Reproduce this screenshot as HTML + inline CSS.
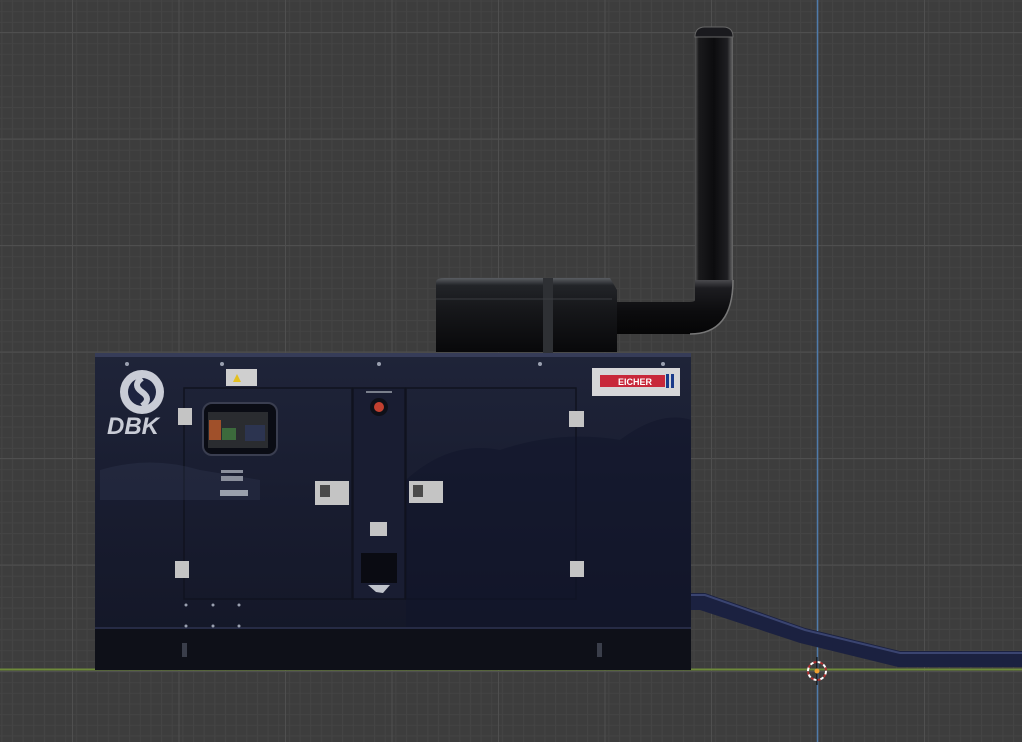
<!DOCTYPE html>
<html><head><meta charset="utf-8"><style>
html,body{margin:0;padding:0;width:1022px;height:742px;overflow:hidden;background:#3d3d3d}
svg{display:block}
</style></head><body>
<svg width="1022" height="742" viewBox="0 0 1022 742" xmlns="http://www.w3.org/2000/svg">
<defs>
<pattern id="minor" width="10.65" height="10.65" patternUnits="userSpaceOnUse" x="1.3" y="0.6">
<path d="M0 0.5H10.65M0.5 0V10.65" stroke="#444444" stroke-width="1" fill="none"/>
</pattern>
<pattern id="major" width="106.5" height="106.5" patternUnits="userSpaceOnUse" x="72" y="32">
<path d="M0 0.5H106.5M0.5 0V106.5" stroke="#4f4f4f" stroke-width="1" fill="none"/>
</pattern>
<linearGradient id="body" x1="0" y1="0" x2="0" y2="1">
<stop offset="0" stop-color="#1f2439"/><stop offset="0.5" stop-color="#181c2f"/><stop offset="1" stop-color="#131626"/>
</linearGradient>
<linearGradient id="vpipe" x1="0" y1="0" x2="1" y2="0">
<stop offset="0" stop-color="#555"/><stop offset="0.1" stop-color="#1a1a1c"/><stop offset="0.5" stop-color="#0c0c0e"/><stop offset="0.85" stop-color="#1e1e22"/><stop offset="1" stop-color="#6a6a6a"/>
</linearGradient>
<linearGradient id="hpipe" x1="0" y1="0" x2="0" y2="1">
<stop offset="0" stop-color="#4a4a4e"/><stop offset="0.15" stop-color="#1c1c20"/><stop offset="0.6" stop-color="#0c0c0e"/><stop offset="1" stop-color="#050506"/>
</linearGradient>
<linearGradient id="muff" x1="0" y1="0" x2="0" y2="1">
<stop offset="0" stop-color="#5a5d62"/><stop offset="0.1" stop-color="#222428"/><stop offset="0.4" stop-color="#17181b"/><stop offset="1" stop-color="#08080a"/>
</linearGradient>
</defs>
<rect width="1022" height="742" fill="url(#minor)"/>
<rect width="1022" height="742" fill="url(#major)"/>
<line x1="0" y1="669.5" x2="1022" y2="669.5" stroke="#6e8a3a" stroke-width="2"/>
<line x1="817.5" y1="0" x2="817.5" y2="742" stroke="#4f7bab" stroke-width="1.5"/>

<!-- hose -->
<path d="M688 593 L705 593 L805 628 L900 651 L1022 651 L1022 667 L898 667 L800 643 L700 610 L688 610 Z" fill="#1b2140"/>
<path d="M688 595 L705 595 L805 630 L900 653 L1022 653" stroke="#3a4470" stroke-width="2" fill="none"/>

<!-- exhaust -->
<rect x="695" y="35" width="38" height="260" fill="url(#vpipe)"/>
<path d="M695 37 Q695 27 705 27 L723 27 Q733 27 733 37 Z" fill="#1a1a1e" stroke="#666" stroke-width="1"/>
<path d="M695 280 L695 300 Q695 302 688 302 L610 302 L610 334 L690 334 Q733 334 733 280 Z" fill="url(#hpipe)"/>
<path d="M733 280 Q733 334 690 334" stroke="#777" stroke-width="1.5" fill="none"/>
<path d="M436 282 Q436 278 445 278 L610 278 L617 290 L617 352 L436 352 Z" fill="url(#muff)"/>
<rect x="543" y="278" width="10" height="75" fill="#2e3034"/>
<line x1="436" y1="299" x2="612" y2="299" stroke="#3a3c40" stroke-width="1"/>

<!-- generator body -->
<rect x="95" y="353" width="596" height="317" fill="url(#body)"/>
<rect x="95" y="353" width="596" height="4" fill="#363c58"/>
<rect x="95" y="628" width="596" height="42" fill="#0e1018"/>
<line x1="95" y1="628" x2="691" y2="628" stroke="#262b45" stroke-width="2"/>
<rect x="184" y="388" width="168" height="211" fill="none" stroke="#10131f" stroke-width="1.5"/>
<rect x="406" y="388" width="170" height="211" fill="none" stroke="#10131f" stroke-width="1.5"/>
<rect x="353" y="388" width="52" height="211" fill="#191d32" stroke="#10131f" stroke-width="1.5"/>
<path d="M406 480 Q450 440 500 450 Q560 430 620 440 Q660 410 691 420 L691 627 L406 627 Z" fill="#10142a" opacity="0.5"/>
<path d="M100 470 Q150 455 200 470 L260 480 L260 500 L100 500 Z" fill="#3a4260" opacity="0.25"/>
<g fill="#9aa0b0">
<circle cx="127" cy="364" r="2"/><circle cx="222" cy="364" r="2"/><circle cx="379" cy="364" r="2"/>
<circle cx="540" cy="364" r="2"/><circle cx="663" cy="364" r="2"/>
<circle cx="186" cy="605" r="1.5"/><circle cx="213" cy="605" r="1.5"/><circle cx="239" cy="605" r="1.5"/>
<circle cx="186" cy="626" r="1.5"/><circle cx="213" cy="626" r="1.5"/><circle cx="239" cy="626" r="1.5"/>
</g>
<circle cx="142" cy="392" r="22" fill="#c9ccd6"/>
<circle cx="142" cy="392" r="14" fill="#1e2440"/>
<path d="M142 378 Q132 385 142 392 Q152 399 142 406" stroke="#c9ccd6" stroke-width="6" fill="none"/>
<text x="107" y="434" font-family="Liberation Sans, sans-serif" font-weight="bold" font-style="italic" font-size="24" fill="#c9ccd6">DBK</text>
<rect x="226" y="369" width="31" height="17" fill="#cfcfcf"/>
<polygon points="233,382 237,374 241,382" fill="#e4c020"/>
<rect x="203" y="403" width="74" height="52" rx="9" fill="#0a0c14" stroke="#3a3e50" stroke-width="2"/>
<rect x="208" y="412" width="60" height="36" fill="#2a2c30"/>
<rect x="209" y="420" width="12" height="20" fill="#a0502a"/>
<rect x="222" y="428" width="14" height="12" fill="#3c6a3c"/>
<rect x="245" y="425" width="20" height="16" fill="#2c3450"/>
<rect x="221" y="470" width="22" height="3" fill="#8a8f9c"/>
<rect x="221" y="476" width="22" height="5" fill="#8a8f9c"/>
<rect x="220" y="490" width="28" height="6" fill="#9aa0ac"/>
<g fill="#c4c4c4">
<rect x="178" y="408" width="14" height="17"/><rect x="175" y="561" width="14" height="17"/>
<rect x="569" y="411" width="15" height="16"/><rect x="570" y="561" width="14" height="16"/>
<rect x="315" y="481" width="34" height="24"/><rect x="409" y="481" width="34" height="22"/>
<rect x="370" y="522" width="17" height="14"/>
</g>
<g fill="#4a4a4a"><rect x="320" y="485" width="10" height="12"/><rect x="413" y="485" width="10" height="12"/></g>
<circle cx="379" cy="407" r="9" fill="#0e1018"/>
<circle cx="379" cy="407" r="5" fill="#c24030"/>
<rect x="366" y="391" width="26" height="2" fill="#7a7f8c"/>
<rect x="361" y="553" width="36" height="30" fill="#0a0b12"/>
<path d="M368 585 L390 585 L383 593 L376 592 Z" fill="#c0c4cc"/>
<rect x="592" y="368" width="88" height="28" fill="#d6d6d8"/>
<rect x="600" y="375" width="65" height="12" fill="#c8283a"/>
<text x="618" y="385" font-family="Liberation Sans, sans-serif" font-weight="bold" font-size="9" fill="#fff">EICHER</text>
<rect x="666" y="374" width="3" height="14" fill="#1a3a8a"/><rect x="671" y="374" width="3" height="14" fill="#1a3a8a"/>
<rect x="182" y="643" width="5" height="14" fill="#3a3e4a"/><rect x="597" y="643" width="5" height="14" fill="#3a3e4a"/>

<circle cx="817" cy="671" r="9" fill="none" stroke="#fff" stroke-width="2" stroke-dasharray="4 3"/>
<circle cx="817" cy="671" r="9" fill="none" stroke="#b03030" stroke-width="2" stroke-dasharray="3 4" stroke-dashoffset="3.5"/>
<line x1="817" y1="657" x2="817" y2="685" stroke="#000" stroke-width="1"/>
<circle cx="817" cy="671" r="2.5" fill="#f0a030"/>
</svg>
</body></html>
